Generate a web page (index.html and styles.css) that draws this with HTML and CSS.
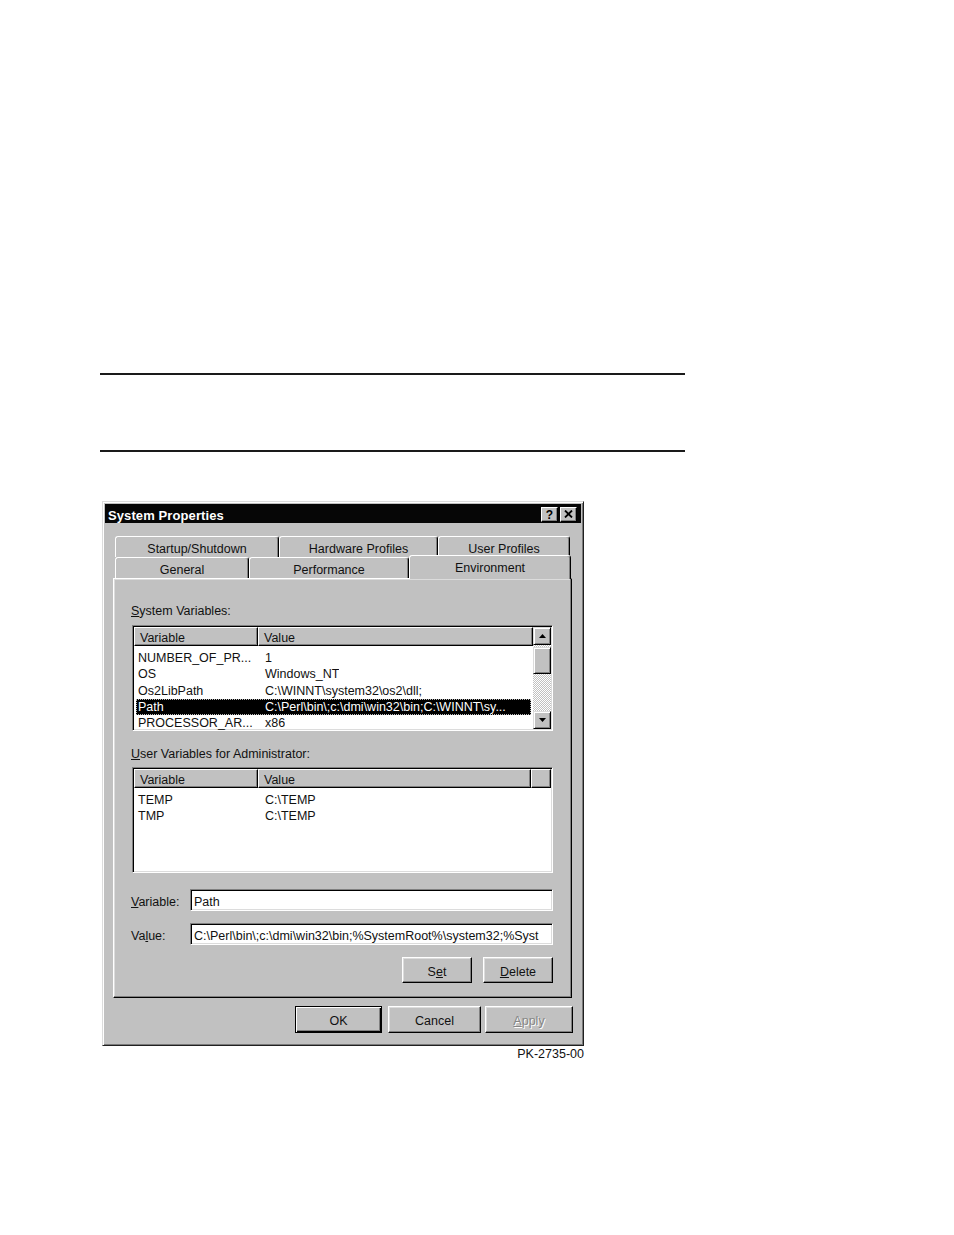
FILE: index.html
```html
<!DOCTYPE html>
<html>
<head>
<meta charset="utf-8">
<title>System Properties</title>
<link rel="stylesheet" href="styles.css">
</head>
<body>
<div class="page">
  <div class="note"></div>
  <figure class="figure">
    <div class="dialog">
      <div class="titlebar">
        <span class="title">System Properties</span>
        <span class="tbtns">
          <span class="tbtn help">?</span>
          <span class="tbtn close"><svg width="9" height="8" viewBox="0 0 9 8"><path d="M1 0.5 L8 7.5 M8 0.5 L1 7.5" stroke="#000" stroke-width="1.8" fill="none"/></svg></span>
        </span>
      </div>

      <div class="tabs">
        <div class="tabrow back">
          <div class="tab w-startup">Startup/Shutdown</div>
          <div class="tab w-hardware">Hardware Profiles</div>
          <div class="tab w-user">User Profiles</div>
        </div>
        <div class="tabrow front">
          <div class="tab w-general">General</div>
          <div class="tab w-perf">Performance</div>
          <div class="tab w-env sel">Environment</div>
        </div>
      </div>

      <div class="panel">
        <div class="label"><u>S</u>ystem Variables:</div>
        <div class="listbox">
          <div class="lmain">
            <div class="lhead">
              <div class="hcell h1">Variable</div>
              <div class="hcell h2">Value</div>
            </div>
            <div class="rows">
              <div class="row"><span class="c1">NUMBER_OF_PR...</span><span class="c2">1</span></div>
              <div class="row"><span class="c1">OS</span><span class="c2">Windows_NT</span></div>
              <div class="row"><span class="c1">Os2LibPath</span><span class="c2">C:\WINNT\system32\os2\dll;</span></div>
              <div class="row selrow"><span class="c1">Path</span><span class="c2">C:\Perl\bin\;c:\dmi\win32\bin;C:\WINNT\sy...</span></div>
              <div class="row"><span class="c1">PROCESSOR_AR...</span><span class="c2">x86</span></div>
            </div>
          </div>
          <div class="vscroll">
            <div class="sbtn"><svg width="7" height="4" viewBox="0 0 7 4"><path d="M3.5 0 L7 4 L0 4 Z" fill="#000"/></svg></div>
            <div class="track small"></div>
            <div class="thumb"></div>
            <div class="track grow"></div>
            <div class="sbtn"><svg width="7" height="4" viewBox="0 0 7 4"><path d="M0 0 L7 0 L3.5 4 Z" fill="#000"/></svg></div>
          </div>
        </div>

        <div class="label label2"><u>U</u>ser Variables for Administrator:</div>
        <div class="listbox list2">
          <div class="lmain full">
            <div class="lhead">
              <div class="hcell h1">Variable</div>
              <div class="hcell h2b">Value</div>
              <div class="hcell h3"></div>
            </div>
            <div class="rows">
              <div class="row"><span class="c1">TEMP</span><span class="c2">C:\TEMP</span></div>
              <div class="row"><span class="c1">TMP</span><span class="c2">C:\TEMP</span></div>
            </div>
          </div>
        </div>

        <div class="field f1">
          <span class="flabel"><u>V</u>ariable:</span>
          <div class="input">Path</div>
        </div>
        <div class="field f2">
          <span class="flabel">Va<u>l</u>ue:</span>
          <div class="input">C:\Perl\bin\;c:\dmi\win32\bin;%SystemRoot%\system32;%Syst</div>
        </div>

        <div class="panelbtns">
          <div class="btn small">S<u>e</u>t</div>
          <div class="btn small"><u>D</u>elete</div>
        </div>
      </div>

      <div class="dlgbtns">
        <div class="btn default b-ok">OK</div>
        <div class="btn b-cancel">Cancel</div>
        <div class="btn b-apply disabled"><u>A</u>pply</div>
      </div>
    </div>
    <figcaption class="caption">PK-2735-00</figcaption>
  </figure>
</div>
</body>
</html>
```

FILE: styles.css
```css
html, body {
  margin: 0;
  padding: 0;
  background: #fff;
}

body {
  font-family: "Liberation Sans", Arial, sans-serif;
  font-size: 12.5px;
  color: #111;
}

.page {
  width: 954px;
  height: 1235px;
  overflow: hidden;
}

.note {
  margin: 373px 0 0 100px;
  width: 585px;
  height: 75px;
  border-top: 2px solid #1a1a1a;
  border-bottom: 2px solid #1a1a1a;
}

.figure {
  margin: 49px 0 0 102px;
  width: 482px;
}

.dialog {
  box-sizing: border-box;
  width: 482px;
  height: 545px;
  background: #c1c1c1;
  border: 1px solid;
  border-color: #dcdcdc #202020 #202020 #dcdcdc;
  box-shadow: inset 1px 1px #fff, inset -1px -1px #7a7a7a;
  padding: 2px 2px 0 2px;
}

.titlebar {
  height: 19px;
  background: #060606;
  display: flex;
  align-items: center;
  justify-content: space-between;
  padding: 0 4px 0 3px;
}

.title {
  color: #fff;
  font-weight: bold;
  font-size: 13px;
  letter-spacing: 0.1px;
  padding-top: 4px;
}

.tbtns {
  display: flex;
  gap: 2px;
  padding-top: 1px;
}

.tbtn {
  box-sizing: border-box;
  width: 17px;
  height: 15px;
  background: #c1c1c1;
  border: 1px solid;
  border-color: #fff #000 #000 #fff;
  box-shadow: inset -1px -1px #808080;
  display: flex;
  align-items: center;
  justify-content: center;
  font-weight: bold;
  font-size: 12px;
  line-height: 1;
  color: #000;
}

.tbtn.help {
  padding-top: 1px;
}

/* Tabs */
.tabs {
  margin: 13px 0 0 10px;
}

.tabrow {
  display: flex;
  height: 21px;
  align-items: flex-start;
}

.tab {
  box-sizing: border-box;
  height: 21px;
  border: 1px solid;
  border-bottom: none;
  border-color: #fff #000 transparent #fff;
  border-radius: 3px 3px 0 0;
  box-shadow: inset -1px 0 #808080;
  background: #c1c1c1;
  text-align: center;
  line-height: 25px;
  white-space: nowrap;
}

.w-startup { width: 164px; }
.w-hardware { width: 159px; }
.w-user { width: 132px; }
.w-general { width: 134px; }
.w-perf { width: 160px; }
.w-env { width: 162px; }

.tab.sel {
  height: 24px;
  margin-top: -2px;
  position: relative;
  z-index: 1;
}

/* Panel */
.panel {
  box-sizing: border-box;
  margin-left: 8px;
  width: 459px;
  height: 420px;
  border: 1px solid;
  border-color: #fff #000 #000 #fff;
  box-shadow: inset -1px -1px #808080, inset 1px 1px #dcdcdc;
  padding: 23px 18px 0 18px;
}

.label {
  line-height: 19px;
  height: 15px;
  margin-left: -1px;
  white-space: nowrap;
}

.label2 {
  margin-top: 14px;
}

.listbox {
  box-sizing: border-box;
  margin-top: 8px;
  height: 106px;
  background: #fff;
  border: 1px solid;
  border-color: #808080 #fff #fff #808080;
  box-shadow: inset 1px 1px #000, inset -1px -1px #dcdcdc;
  padding: 1px;
  display: flex;
}

.list2 {
  margin-top: 7px;
}

.lmain {
  width: 399px;
  display: flex;
  flex-direction: column;
}

.lmain.full {
  width: 417px;
}

.lhead {
  display: flex;
  height: 19px;
}

.hcell {
  box-sizing: border-box;
  height: 19px;
  background: #c1c1c1;
  border: 1px solid;
  border-color: #fff #000 #000 #fff;
  box-shadow: inset -1px -1px #808080;
  padding-left: 5px;
  line-height: 21px;
  white-space: nowrap;
  overflow: hidden;
}

.h1 { width: 124px; }
.h2 { width: 275px; }
.h2b { width: 273px; }
.h3 { width: 20px; }

.rows {
  padding: 4px 2px 0 2px;
}

.row {
  display: flex;
  height: 16.25px;
  line-height: 16px;
  white-space: nowrap;
}

.c1 {
  box-sizing: border-box;
  width: 127px;
  padding-left: 2px;
  overflow: hidden;
}

.c2 {
  padding-left: 2px;
  overflow: hidden;
}

.selrow {
  background: #000;
  color: #fff;
  outline: 1px dotted #bbb;
  outline-offset: -1px;
}

/* Scrollbar */
.vscroll {
  width: 18px;
  display: flex;
  flex-direction: column;
}

.sbtn, .thumb {
  box-sizing: border-box;
  background: #c1c1c1;
  border: 1px solid;
  border-color: #dcdcdc #000 #000 #dcdcdc;
  box-shadow: inset 1px 1px #fff, inset -1px -1px #808080;
}

.sbtn {
  height: 18px;
  display: flex;
  align-items: center;
  justify-content: center;
}

.thumb {
  height: 27px;
}

.track {
  background: repeating-conic-gradient(#fff 0 25%, #c1c1c1 0 50%) 0 0 / 2px 2px;
}

.track.small {
  height: 2px;
}

.track.grow {
  flex: 1;
}

/* Fields */
.field {
  display: flex;
  align-items: center;
  height: 22px;
}

.f1 { margin-top: 16px; }
.f2 { margin-top: 12px; }

.flabel {
  width: 59px;
  height: 22px;
  line-height: 26px;
  margin-left: -1px;
  white-space: nowrap;
}

.input {
  box-sizing: border-box;
  flex: 1;
  height: 22px;
  background: #fff;
  border: 1px solid;
  border-color: #808080 #fff #fff #808080;
  box-shadow: inset 1px 1px #000, inset -1px -1px #dcdcdc;
  padding: 0 2px 0 3px;
  line-height: 24px;
  white-space: nowrap;
  overflow: hidden;
}

/* Buttons */
.panelbtns {
  margin-top: 12px;
  display: flex;
  justify-content: flex-end;
  gap: 11px;
}

.btn {
  box-sizing: border-box;
  height: 26px;
  background: #c1c1c1;
  border: 1px solid;
  border-color: #fff #000 #000 #fff;
  box-shadow: inset -1px -1px #808080, inset 1px 1px #dcdcdc;
  display: flex;
  align-items: center;
  justify-content: center;
  white-space: nowrap;
  padding-top: 4px;
}

.btn.small {
  width: 70px;
}

.dlgbtns {
  margin: 8px 8px 0 0;
  display: flex;
  justify-content: flex-end;
  height: 27px;
}

.dlgbtns .btn {
  height: 27px;
  padding-top: 2px;
}

.b-ok { width: 87px; }
.b-cancel { width: 93px; margin-left: 6px; }
.b-apply { width: 88px; margin-left: 4px; }

.btn.default {
  border-color: #000;
  box-shadow: inset 1px 1px #fff, inset -1px -1px #000, inset -2px -2px #808080;
}

.btn.disabled {
  color: #868686;
  text-shadow: 1px 1px #fff;
}

.caption {
  margin: 0;
  width: 482px;
  text-align: right;
  line-height: 17px;
  font-size: 12.5px;
  color: #111;
}
```
